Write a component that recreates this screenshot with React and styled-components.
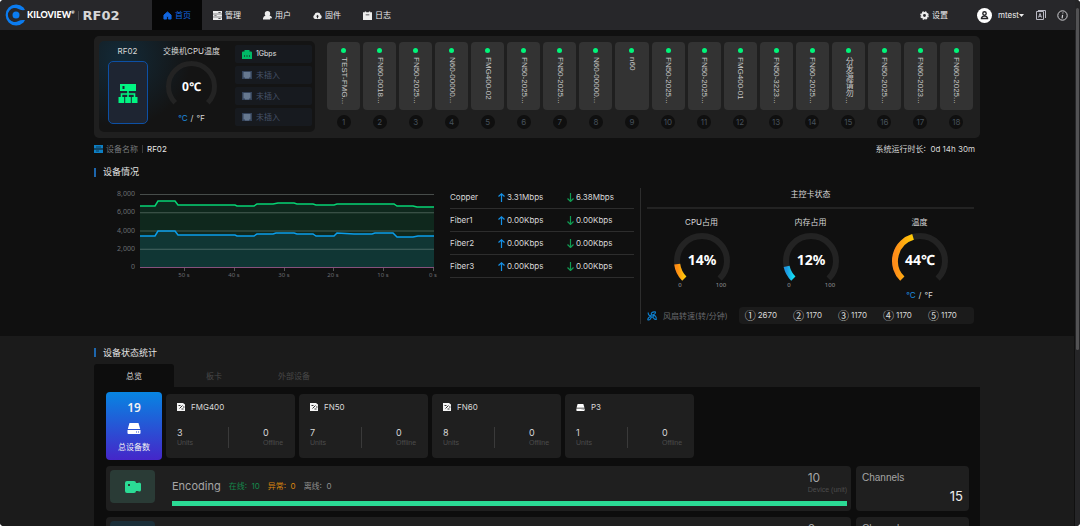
import React from 'react';
import styled, { createGlobalStyle, css } from 'styled-components';

const GlobalStyle = createGlobalStyle`
  * {
    box-sizing: border-box;
  }

  body {
    margin: 0;
    background: #fff;
    color: #d8d8d8;
    font-family: "Inter", "Noto Sans CJK SC", sans-serif;
    font-size: 8px;
    line-height: 12px;
  }

  button {
    border: 0;
    padding: 0;
    background: none;
    color: inherit;
    font: inherit;
    cursor: pointer;
  }

  a {
    color: inherit;
    text-decoration: none;
  }

  svg {
    display: block;
    flex: none;
  }
`;

/* ---------- page ---------- */

const Page = styled.div`
  position: relative;
  height: 100vh;
  overflow: hidden;
  padding-right: 6px;
  border-radius: 4px;
  background: #101010;
`;

const ScrollTrack = styled.div`
  position: absolute;
  top: 0;
  right: 0;
  bottom: 0;
  width: 5px;
  padding: 8px 1px;
  background: #252527;
`;

const ScrollThumb = styled.div`
  height: 67%;
  border-radius: 2px;
  background: #525254;
`;

const Section = styled.section`
  padding: ${(p) => p.$top || 0}px 94px 0;
  background: ${(p) => (p.$light ? '#1b1b1b' : '#101010')};
`;

/* ---------- header ---------- */

const Header = styled.header`
  display: flex;
  align-items: stretch;
  height: 30px;
  margin-right: -6px;
  background: #27272a;
`;

const Brand = styled.a`
  display: flex;
  align-items: center;
  width: 152px;
  padding-left: 5px;
  color: #fff;
`;

const BrandName = styled.span`
  margin-left: 1px;
  font-family: "Lato", sans-serif;
  font-size: 9px;
  font-weight: 900;

  sup {
    font-size: 4px;
    line-height: 0;
    vertical-align: 4px;
  }
`;

const BrandModel = styled.span`
  margin-left: 3px;
  padding-left: 4px;
  border-left: 1px solid #48484b;
  color: #d6d6d6;
  font-family: "DejaVu Sans", sans-serif;
  font-size: 13px;
  font-weight: 700;
  line-height: 9px;
`;

const Nav = styled.nav`
  display: flex;
`;

const NavLink = styled.a`
  display: flex;
  align-items: center;
  justify-content: center;
  gap: 3px;
  width: 50px;
  color: ${(p) => (p.$active ? '#1266e0' : '#ededed')};
  background: ${(p) => (p.$active ? '#060606' : 'transparent')};
`;

const HeaderTools = styled.div`
  display: flex;
  align-items: center;
  margin-left: auto;
  padding-right: 12px;
  color: #ededed;
`;

const ToolButton = styled.button`
  display: flex;
  align-items: center;
  gap: ${(p) => p.$gap || 3}px;
  margin-left: ${(p) => p.$space || 0}px;
`;

/* ---------- device panel ---------- */

const DevicePanel = styled.div`
  display: flex;
  padding: 5px 7px 6px 5px;
  border-radius: 5px;
  background: #1f1f1f;
`;

const SwitchCard = styled.div`
  display: flex;
  width: 216px;
  height: 91px;
  padding: 4px 3px 0 8px;
  border-radius: 5px;
  background: radial-gradient(circle at 22px 16px, #132a38 0, #141414 70px);
`;

const SwitchColumn = styled.div`
  display: flex;
  flex-direction: column;
  align-items: center;
  width: ${(p) => p.$width}px;
`;

const ModelBox = styled.div`
  display: flex;
  align-items: center;
  justify-content: center;
  width: 40px;
  height: 63px;
  margin-top: 4px;
  border: 1px solid #0d50a5;
  border-radius: 5px;
  background: #1e2532;
`;

const DialBox = styled.div`
  margin-top: 4px;
`;

const Ports = styled.ul`
  display: flex;
  flex: 1;
  flex-direction: column;
  gap: 3px;
  margin: 0;
  padding: 0;
  list-style: none;
`;

const Port = styled.li`
  display: flex;
  align-items: center;
  gap: 4px;
  height: 18px;
  padding-left: 7px;
  border-radius: 2px;
  background: #171a1f;
  color: ${(p) => (p.$on ? '#e4e4e4' : '#46536a')};
  font-size: ${(p) => (p.$on ? 7 : 8)}px;
`;

const Slots = styled.ol`
  display: grid;
  flex: 1;
  grid-template-columns: repeat(18, 1fr);
  gap: 3px;
  margin: 0 0 0 12px;
  padding: 1px 0 0;
  list-style: none;
`;

const SlotItem = styled.li`
  display: flex;
  flex-direction: column;
  align-items: center;
  gap: 5px;
`;

const SlotCard = styled.div`
  display: flex;
  flex-direction: column;
  align-items: center;
  gap: 4px;
  width: 100%;
  height: 68px;
  padding-top: 6px;
  border-radius: 4px;
  background: #333;
`;

const Led = styled.i`
  width: 5px;
  height: 5px;
  border-radius: 50%;
  background: #00f57a;
`;

const SlotName = styled.span`
  writing-mode: vertical-rl;
  white-space: nowrap;
  color: #c8c8c8;
  font-family: "Liberation Sans", "Noto Sans CJK SC", sans-serif;
`;

const SlotNumber = styled.span`
  width: 14px;
  height: 14px;
  border-radius: 50%;
  background: #0f0f0f;
  color: #46515b;
  line-height: 14px;
  text-align: center;
`;

const InfoLine = styled.div`
  display: flex;
  align-items: center;
  justify-content: space-between;
  height: 22px;
  padding-right: 5px;
`;

const DeviceName = styled.div`
  display: flex;
  align-items: center;
  gap: 3px;
  color: #77797c;

  b {
    margin-left: 1px;
    padding-left: 4px;
    border-left: 1px solid #3a3a3a;
    color: #e8e8e8;
    font-weight: 400;
    line-height: 8px;
  }
`;

const Title = styled.h2`
  display: flex;
  align-items: center;
  gap: 7px;
  height: ${(p) => p.$height}px;
  margin: 0;
  padding-top: ${(p) => p.$top || 0}px;
  color: #e4e4e4;
  font-size: 9px;
  font-weight: 400;

  &::before {
    content: "";
    width: 2px;
    height: 9px;
    background: #1d66ad;
  }
`;

/* ---------- status ---------- */

const Overview = styled.div`
  display: grid;
  grid-template-columns: 346px 1fr 334px;
  padding: 4px 6px 12px 0;
`;

const Traffic = styled.table`
  width: calc(100% - 16px);
  height: 92px;
  margin: -2px 0 0 10px;
  border-collapse: separate;
  border-spacing: 0;

  th,
  td {
    height: 23px;
    padding: 0;
    border-bottom: 1px solid #2d2d2d;
    font-weight: 400;
    text-align: left;
  }

  th {
    width: 48px;
  }

  td:last-child {
    width: 67px;
  }
`;

const Rate = styled.span`
  display: flex;
  align-items: center;
  gap: 2px;
`;

const Controller = styled.div`
  padding-left: 6px;
  border-left: 1px solid #2d2d2d;
`;

const ControllerTitle = styled.h3`
  height: 21px;
  margin: 0;
  border-bottom: 2px solid #232323;
  font-size: 8px;
  font-weight: 400;
  line-height: 13px;
  text-align: center;
`;

const Gauges = styled.div`
  display: grid;
  grid-template-columns: repeat(3, 1fr);
  height: 98px;
  padding-top: 7px;
`;

const GaugeCell = styled.div`
  display: flex;
  flex-direction: column;
  align-items: center;
`;

const DialHolder = styled.div`
  height: 56px;
  margin-top: 5px;
`;

const GaugeText = styled.text`
  fill: #fff;
  font-family: "Noto Sans", "Noto Sans CJK SC", sans-serif;
  font-size: ${(p) => p.$size}px;
  font-weight: 700;
  text-anchor: middle;
`;

const AxisText = styled.text`
  fill: ${(p) => p.$color || '#6b6d70'};
  font-family: "Noto Sans", sans-serif;
  font-size: ${(p) => p.$size || 6}px;
  text-anchor: ${(p) => p.$anchor || 'middle'};
`;

const Units = styled.div`
  display: flex;
  gap: 3px;
`;

const UnitButton = styled.button`
  color: ${(p) => (p.$on ? '#1d8fe0' : '#d8d8d8')};
`;

const Fans = styled.div`
  display: flex;
  align-items: center;
  gap: 6px;
  color: #67696c;
`;

const FanList = styled.ul`
  display: flex;
  flex: 1;
  gap: 16px;
  margin: 0 0 0 5px;
  padding: 0 6px;
  border-radius: 4px;
  background: #1b1b1b;
  color: #d8d8d8;
  line-height: 17px;
  list-style: none;

  li {
    display: flex;
    align-items: center;
    gap: 2px;
  }
`;

const FanNumber = styled.span`
  font-family: "Noto Sans CJK SC", sans-serif;
  font-size: 11px;
`;

/* ---------- statistics ---------- */

const Tabs = styled.div`
  display: flex;
`;

const Tab = styled.button`
  width: 80px;
  height: 23px;
  border-radius: 3px 3px 0 0;
  color: #484848;

  ${(p) =>
    p.$active &&
    css`
      background: #0d0d0d;
      color: #dcdcdc;
    `}
`;

const StatsPanel = styled.div`
  padding: 5px 11px 5px 12px;
  background: #0d0d0d;
`;

const Models = styled.div`
  display: flex;
  align-items: center;
  gap: 4px;
  margin-bottom: 6px;
`;

const Total = styled.div`
  display: flex;
  flex-direction: column;
  align-items: center;
  width: 56px;
  height: 68px;
  padding-top: 10px;
  border-radius: 4px;
  background: linear-gradient(#0785e2, #4526c9);
  color: #f2f2f2;

  strong {
    margin-bottom: 9px;
    font-family: "Noto Sans", sans-serif;
    font-size: 12px;
    font-weight: 600;
  }

  span {
    margin-top: 7px;
  }
`;

const ModelCard = styled.div`
  width: 129px;
  height: 64px;
  padding: 7px 11px 0;
  border-radius: 4px;
  background: #1f1f1f;
`;

const ModelName = styled.div`
  display: flex;
  align-items: center;
  gap: 6px;
`;

const ModelCounts = styled.dl`
  display: flex;
  margin: 14px 0 0;
`;

const Count = styled.div`
  display: flex;
  flex-direction: column-reverse;
  width: 51px;
  line-height: 11px;

  & + & {
    padding-left: 34px;
    border-left: 1px solid #3a3a3a;
  }

  dt {
    color: #4c4c4c;
    font-family: "Liberation Sans", sans-serif;
    font-size: 7px;
    line-height: 10px;
  }

  dd {
    margin: 0;
    font-size: 9px;
  }
`;

const StatRow = styled.div`
  display: flex;
  gap: 5px;
  margin-bottom: 6px;
`;

const StatCard = styled.div`
  display: flex;
  flex: 1;
  gap: 17px;
  height: 45px;
  padding: 4px 4px 0;
  border-radius: 4px;
  background: #1f1f1f;
`;

const StatIcon = styled.div`
  display: flex;
  align-items: center;
  justify-content: center;
  width: 45px;
  height: 33px;
  border-radius: 4px;
  background: ${(p) => p.$color};
`;

const StatBody = styled.div`
  flex: 1;
`;

const StatHead = styled.div`
  display: flex;
  align-items: center;
  gap: 8px;
  height: 31px;
`;

const StatName = styled.h3`
  margin: 0;
  color: #a5a5a5;
  font-size: 11px;
  font-weight: 400;
`;

const StatTag = styled.span`
  color: ${(p) => p.$color};
`;

const StatTotal = styled.div`
  align-self: flex-start;
  margin-left: auto;
  padding-top: 2px;
  color: #4c4c4c;
  font-family: "Liberation Sans", sans-serif;
  font-size: 7px;

  b {
    display: block;
    color: #a5a5a5;
    font-family: "Inter", sans-serif;
    font-size: 12px;
    font-weight: 400;
  }
`;

const Meter = styled.div`
  height: 5px;
  background: #2bdb95;
`;

const Channels = styled.div`
  width: 113px;
  height: 45px;
  padding: 6px 6px 0;
  border-radius: 4px;
  background: #1f1f1f;
  color: #a5a5a5;
  font-family: "Liberation Sans", sans-serif;
  font-size: 10px;

  b {
    display: block;
    margin-top: 6px;
    color: #ececec;
    font-family: "Inter", sans-serif;
    font-size: 13px;
    font-weight: 400;
    text-align: right;
  }
`;

/* ---------- icons ---------- */

const LogoIcon = () => (
  <svg width="21" height="22" viewBox="0 0 21 22">
    <path d="M18.500 3.500A10.500 10.500 0 1 0 18.500 18.500L20 16Q15.500 15.500 13.500 17A7 7 0 1 1 13.500 5Q15.500 6.500 20 6Z" fill="#0b7cf0" />
    <circle cx="11" cy="11" r="3.500" fill="#0b7cf0" />
  </svg>
);

const navIcons = {
  home: <path d="M5 1L9 4.500V9H6V6H4V9H1V4.500Z" stroke="currentColor" strokeLinejoin="round" />,
  manage: (
    <path fillRule="evenodd" d="M0 0H10V3H0ZM0 3.700H10V6.300H0ZM0 7H10V10H0ZM6 1V2H8.500V1ZM1.500 4.600V5.400H4V4.600ZM6 8V9H8.500V8Z" />
  ),
  user: (
    <>
      <circle cx="5" cy="3" r="3" />
      <path d="M0 9.500V8Q.5 5.500 3 5H7Q9.500 5.500 10 7.500V8H8V9.500Z" />
    </>
  ),
  firmware: (
    <path fillRule="evenodd" d="M2.500 9A2.500 2.500 0 0 1 1.500 4.400A3.600 3.600 0 0 1 8.500 4.400A2.500 2.500 0 0 1 7.500 9ZM5 4.200L3.300 6H4.400V8H5.600V6H6.700Z" />
  ),
  log: (
    <path fillRule="evenodd" d="M0 1.500H2V.5H3.500V1.500H6.500V.5H8V1.500H10V10H0ZM3 4V4.700H7V4Z" />
  ),
};

const NavIcon = ({ name }) => (
  <svg width="9" height="9" viewBox="0 0 10 10" fill="currentColor">
    {navIcons[name]}
  </svg>
);

const GearIcon = () => (
  <svg width="9" height="9" viewBox="0 0 10 10">
    <circle cx="5" cy="5" r="2.700" fill="none" stroke="currentColor" strokeWidth="2.200" />
    <circle cx="5" cy="5" r="4" fill="none" stroke="currentColor" strokeWidth="1.600" strokeDasharray="1.900 1.240" />
  </svg>
);

const AvatarIcon = () => (
  <svg width="15" height="15" viewBox="0 0 15 15">
    <circle cx="7.500" cy="7.500" r="7.500" fill="#fff" />
    <circle cx="7.500" cy="5.500" r="1.700" fill="none" stroke="#27272a" strokeWidth="1.400" />
    <path d="M4.500 10.500V10Q5 8 7.500 8T10.500 10V10.500Z" fill="none" stroke="#27272a" strokeWidth="1.400" />
  </svg>
);

const CaretIcon = () => (
  <svg width="5" height="3" viewBox="0 0 5 3">
    <path d="M0 0H5L2.500 3Z" fill="currentColor" />
  </svg>
);

const LangIcon = () => (
  <svg width="10" height="10" viewBox="0 0 10 10" fill="none" stroke="#b9b9c4">
    <path d="M2 .5H9.500V8" />
    <path d="M.5 1.500H7.500V9.500H.5Z" />
    <path d="M2.500 7.500L4 3.500L5.500 7.500M3 6.300H5" />
  </svg>
);

const InfoIcon = () => (
  <svg width="11" height="11" viewBox="0 0 11 11" fill="none" stroke="#d0d0d4">
    <circle cx="5.500" cy="5.500" r="4.700" />
    <path d="M6 2.500L5.800 3.500M5.600 4.800L5.100 8.300" strokeWidth="1.200" />
  </svg>
);

const SwitchIcon = () => (
  <svg width="20" height="20" viewBox="0 0 20 20" fill="#00f582">
    <path fillRule="evenodd" d="M2 1H18V8H2ZM4.500 3V6H6.500V3Z" />
    <path d="M10 8V14M3.500 15V11H16.500V15" fill="none" stroke="#00f582" strokeWidth="1.600" />
    <path d="M.500 14H6.200V20H.500ZM7.200 14H12.800V20H7.200ZM13.800 14H19.500V20H13.800Z" />
  </svg>
);

const PortIcon = ({ on }) =>
  on ? (
    <svg width="10" height="9" viewBox="0 0 10 9">
      <path d="M2.500 0H7.500V1.500H9Q10 1.500 10 2.500V9H0V2.500Q0 1.500 1 1.500H2.500Z" fill="#00b866" />
      <path d="M2.500 5V7M5 5V7M7.500 5V7" stroke="#0e5c3a" />
    </svg>
  ) : (
    <svg width="10" height="8" viewBox="0 0 10 8">
      <path d="M0 0H10V8H0Z" fill="#34435a" />
      <path d="M1.500 1H8.500V6.500H7V7.500H3V6.500H1.500Z" fill="#66788f" />
    </svg>
  );

const DeviceIcon = () => (
  <svg width="9" height="8" viewBox="0 0 9 8">
    <path d="M0 0H9V3.500H0ZM0 4.500H9V8H0Z" fill="#0d7fc4" />
    <path d="M2 2H7M2 6H5" stroke="#101010" strokeWidth=".6" />
  </svg>
);

const ArrowIcon = ({ down }) => (
  <svg width="7" height="9" viewBox="0 0 7 9" fill="none" stroke={down ? '#109b52' : '#1490e6'} strokeWidth="1.200">
    {down ? <path d="M3.500 0V8.500M.5 5.500L3.500 8.500L6.500 5.500" /> : <path d="M3.500 9V.8M.5 3.500L3.500 .8L6.500 3.500" />}
  </svg>
);

const FanIcon = () => (
  <svg width="10" height="10" viewBox="0 0 10 10" fill="none" stroke="#0d84d6" strokeWidth="1.100">
    <circle cx="5" cy="5" r="1.200" />
    <path d="M4.500 4C3.500 2 5.500 .5 8.500 1C9 3 7 3 6 4.200M6 5C8 4 9.500 5 9.200 8.500C7.500 9 7 7.500 5.700 6.200M4.300 5.800C4 8 2.500 9.500 .8 8.800C.8 7 2 6 3.800 5.200M3.800 4.600C2 4.500 1 3.500 1.200 1.500" />
  </svg>
);

const DiskIcon = ({ width, height }) => (
  <svg width={width} height={height} viewBox="0 0 14 11" fill="#fff">
    <path d="M2.500 0H11.500L13.200 6H.8Z" />
    <path fillRule="evenodd" d="M.5 7H13.500V10Q13.500 11 12.500 11H1.500Q.5 11 .5 10ZM9 8.500V9.500H10V8.500ZM11 8.500V9.500H12V8.500Z" />
  </svg>
);

const CardIcon = () => (
  <svg width="8" height="8" viewBox="0 0 8 8">
    <path d="M0 0H6L8 1.500V8H0Z" fill="#f4f4f4" />
    <path d="M1.500 2.500H3.500M2.500 5.500L5.500 2.500M4.500 6H6.500M6 4H7.500" stroke="#1f1f1f" strokeWidth=".9" />
  </svg>
);

const CameraIcon = ({ color }) => (
  <svg width="16" height="12" viewBox="0 0 16 12" fill={color}>
    <path fillRule="evenodd" d="M2 0H9Q11 0 11 2H13L14 1.500Q16 1.500 16 3V9Q16 10.500 14 10.500L13 10H11Q11 12 9 12H2Q0 12 0 10V2Q0 0 2 0ZM3 3V5H5V3Z" />
  </svg>
);

/* ---------- gauge ---------- */

// the dial opens at the bottom and covers 270 degrees
const polar = (c, r, percent) => {
  const a = ((135 + percent * 2.7) * Math.PI) / 180;
  return `${c + r * Math.cos(a)} ${c + r * Math.sin(a)}`;
};

const arc = (c, r, percent) =>
  `M${polar(c, r, 0)}A${r} ${r} 0 ${percent * 2.7 > 180 ? 1 : 0} 1 ${polar(c, r, percent)}`;

function Gauge({ id, size, stroke, value, label, textSize, from, to, scale }) {
  const c = size / 2;
  const r = c - stroke / 2;
  return (
    <svg width={size} height={size} viewBox={`0 0 ${size} ${size}`} overflow="visible">
      <defs>
        <linearGradient id={id}>
          <stop offset="0" stopColor={from} />
          <stop offset="1" stopColor={to} />
        </linearGradient>
      </defs>
      <path d={arc(c, r, 100)} fill="none" stroke="#232323" strokeWidth={stroke} />
      {value > 0 && <path d={arc(c, r, value)} fill="none" stroke={`url(#${id})`} strokeWidth={stroke} />}
      <GaugeText x={c} y={c + 4} $size={textSize}>{label}</GaugeText>
      {scale && (
        <>
          <AxisText x="6" y="54" $color="#97999c">0</AxisText>
          <AxisText x="47" y="54" $color="#97999c">100</AxisText>
        </>
      )}
    </svg>
  );
}

function UnitSwitch() {
  return (
    <Units>
      <UnitButton $on>℃</UnitButton>/<UnitButton>℉</UnitButton>
    </Units>
  );
}

/* ---------- chart ---------- */

const upper = '46,18 61,18 64,13 81,13 84,17 94,17 102,17 141,17 143,18 160,18 163,16 179,16 184,15 200,15 203,16 219,16 222,17 240,17 243,16 260,16 300,16 303,18 319,18 323,19 340,19';
const lower = '46,48 61,48 64,43 81,43 84,47 94,47 102,47 141,47 143,48 160,48 163,46 179,46 182,45 200,45 203,46 219,46 222,48 240,48 243,45 260,46 278,46 281,45 299,45 303,49 319,49 324,48 340,48';

const xLabels = [
  ['50 s', 90],
  ['40 s', 140],
  ['30 s', 190],
  ['20 s', 239],
  ['10 s', 289],
  ['0 s', 339],
];

function TrafficChart() {
  return (
    <svg width="346" height="92" viewBox="0 0 346 92">
      <polygon points={`${upper} 340,79 46,79`} fill="#0f281d" />
      <polygon points={`${lower} 340,79 46,79`} fill="#103634" />
      {['8,000', '6,000', '4,000', '2,000', '0'].map((label, i) => (
        <g key={label}>
          <path d={`M46 ${6.5 + i * 18.25}H340`} stroke={i === 4 ? '#87517c' : '#c8d8d0'} strokeOpacity={i === 4 ? 1 : 0.3} />
          <AxisText x="41" y={8 + i * 18.25} $size={7} $anchor="end">{label}</AxisText>
        </g>
      ))}
      {xLabels.map(([label, x]) => (
        <g key={label}>
          <path d={`M${x + 0.5} 80V83`} stroke="#555" />
          <AxisText x={x} y="89" $size={6}>{label}</AxisText>
        </g>
      ))}
      <polyline points={upper} fill="none" stroke="#06d474" strokeWidth="1.500" />
      <polyline points={lower} fill="none" stroke="#0a9dea" strokeWidth="1.500" />
    </svg>
  );
}

/* ---------- data ---------- */

const navItems = [
  ['home', '首页'],
  ['manage', '管理'],
  ['user', '用户'],
  ['firmware', '固件'],
  ['log', '日志'],
];

const slots = [
  'TEST-FMG...', 'FN60-0018...', 'FN50-2025...', 'N60-00000...', 'FMG400-02', 'FN50-2025...',
  'FN50-2025...', 'N60-00000...', 'n60', 'FN50-2025...', 'FN50-2025...', 'FMG400-01',
  'FN50-3223...', 'FN60-2025...', '分发源请勿...', 'FN50-2025...', 'FN60-2023...', 'FN60-2025...',
];

const traffic = [
  ['Copper', '3.31Mbps', '6.38Mbps'],
  ['Fiber1', '0.00Kbps', '0.00Kbps'],
  ['Fiber2', '0.00Kbps', '0.00Kbps'],
  ['Fiber3', '0.00Kbps', '0.00Kbps'],
];

const fans = [['①', 2670], ['②', 1170], ['③', 1170], ['④', 1170], ['⑤', 1170]];

const models = [
  { name: 'FMG400', units: 3 },
  { name: 'FN50', units: 7 },
  { name: 'FN60', units: 8 },
  { name: 'P3', units: 1, disk: true },
];

const stats = [
  { name: 'Encoding', online: 10, total: 10, channels: 15, color: '#2bdb95', tint: '#2a3b36' },
  { name: 'Decoding', online: 8, total: 8, channels: 8, color: '#1d8fe0', tint: '#1b2f39' },
];

/* ---------- app ---------- */

function TopBar() {
  return (
    <Header>
      <Brand href="#home">
        <LogoIcon />
        <BrandName>KILOVIEW<sup>®</sup></BrandName>
        <BrandModel>RF02</BrandModel>
      </Brand>
      <Nav>
        {navItems.map(([icon, label], i) => (
          <NavLink key={icon} href={`#${icon}`} $active={i === 0}>
            <NavIcon name={icon} />
            {label}
          </NavLink>
        ))}
      </Nav>
      <HeaderTools>
        <ToolButton><GearIcon />设置</ToolButton>
        <ToolButton $space={29} $gap={6}><AvatarIcon />mtest</ToolButton>
        <CaretIcon />
        <ToolButton $space={12} aria-label="Language"><LangIcon /></ToolButton>
        <ToolButton $space={11} aria-label="Info"><InfoIcon /></ToolButton>
      </HeaderTools>
    </Header>
  );
}

function App() {
  return (
    <>
      <GlobalStyle />
      <Page>
        <TopBar />
        <Section $top={6}>
          <DevicePanel>
            <SwitchCard>
              <SwitchColumn $width={41}>
                RF02
                <ModelBox><SwitchIcon /></ModelBox>
              </SwitchColumn>
              <SwitchColumn $width={87}>
                交换机CPU温度
                <DialBox>
                  <Gauge id="sw" size={51} stroke={5} value={0} label="0℃" textSize={12} />
                </DialBox>
                <UnitSwitch />
              </SwitchColumn>
              <Ports>
                <Port $on><PortIcon on />1Gbps</Port>
                <Port><PortIcon />未插入</Port>
                <Port><PortIcon />未插入</Port>
                <Port><PortIcon />未插入</Port>
              </Ports>
            </SwitchCard>
            <Slots>
              {slots.map((name, i) => (
                <SlotItem key={i}>
                  <SlotCard>
                    <Led />
                    <SlotName>{name}</SlotName>
                  </SlotCard>
                  <SlotNumber>{i + 1}</SlotNumber>
                </SlotItem>
              ))}
            </Slots>
          </DevicePanel>
          <InfoLine>
            <DeviceName><DeviceIcon />设备名称 <b>RF02</b></DeviceName>
            <span>系统运行时长:&nbsp; 0d 14h 30m</span>
          </InfoLine>
          <Title $height={24}>设备情况</Title>
          <Overview>
            <TrafficChart />
            <Traffic>
              <tbody>
                {traffic.map(([name, up, down]) => (
                  <tr key={name}>
                    <th scope="row">{name}</th>
                    <td><Rate><ArrowIcon />{up}</Rate></td>
                    <td><Rate><ArrowIcon down />{down}</Rate></td>
                  </tr>
                ))}
              </tbody>
            </Traffic>
            <Controller>
              <ControllerTitle>主控卡状态</ControllerTitle>
              <Gauges>
                <GaugeCell>
                  CPU占用
                  <DialHolder>
                    <Gauge id="cpu" size={56} stroke={6} value={14} label="14%" textSize={14} from="#ff8c14" to="#ffc60a" scale />
                  </DialHolder>
                </GaugeCell>
                <GaugeCell>
                  内存占用
                  <DialHolder>
                    <Gauge id="mem" size={56} stroke={6} value={12} label="12%" textSize={14} from="#1f98e0" to="#12dcf5" scale />
                  </DialHolder>
                </GaugeCell>
                <GaugeCell>
                  温度
                  <DialHolder>
                    <Gauge id="temp" size={56} stroke={6} value={44} label="44℃" textSize={14} from="#ff8c1a" to="#ffcc05" />
                  </DialHolder>
                  <UnitSwitch />
                </GaugeCell>
              </Gauges>
              <Fans>
                <FanIcon />
                风扇转速(转/分钟)
                <FanList>
                  {fans.map(([n, speed]) => (
                    <li key={n}><FanNumber>{n}</FanNumber>{speed}</li>
                  ))}
                </FanList>
              </Fans>
            </Controller>
          </Overview>
        </Section>
        <Section $light>
          <Title $height={28} $top={5}>设备状态统计</Title>
          <Tabs role="tablist">
            <Tab role="tab" aria-selected="true" $active>总览</Tab>
            <Tab role="tab" aria-selected="false">板卡</Tab>
            <Tab role="tab" aria-selected="false">外部设备</Tab>
          </Tabs>
          <StatsPanel>
            <Models>
              <Total>
                <strong>19</strong>
                <DiskIcon width={14} height={11} />
                <span>总设备数</span>
              </Total>
              {models.map((m) => (
                <ModelCard key={m.name}>
                  <ModelName>
                    {m.disk ? <DiskIcon width={9} height={7} /> : <CardIcon />}
                    {m.name}
                  </ModelName>
                  <ModelCounts>
                    <Count><dt>Units</dt><dd>{m.units}</dd></Count>
                    <Count><dt>Offline</dt><dd>0</dd></Count>
                  </ModelCounts>
                </ModelCard>
              ))}
            </Models>
            {stats.map((s) => (
              <StatRow key={s.name}>
                <StatCard>
                  <StatIcon $color={s.tint}><CameraIcon color={s.color} /></StatIcon>
                  <StatBody>
                    <StatHead>
                      <StatName>{s.name}</StatName>
                      <StatTag $color="#14894b">在线:&nbsp; {s.online}</StatTag>
                      <StatTag $color="#d98510">异常:&nbsp; 0</StatTag>
                      <StatTag $color="#8f8f8f">离线:&nbsp; 0</StatTag>
                      <StatTotal><b>{s.total}</b>Device (unit)</StatTotal>
                    </StatHead>
                    <Meter />
                  </StatBody>
                </StatCard>
                <Channels>Channels<b>{s.channels}</b></Channels>
              </StatRow>
            ))}
          </StatsPanel>
        </Section>
        <ScrollTrack><ScrollThumb /></ScrollTrack>
      </Page>
    </>
  );
}

export default App;
